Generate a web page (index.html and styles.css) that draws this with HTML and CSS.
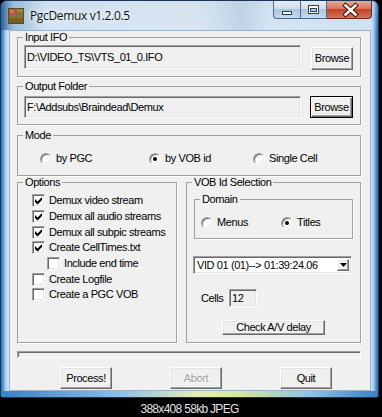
FILE: index.html
```html
<!DOCTYPE html>
<html lang="en">
<head>
<meta charset="utf-8">
<title>PgcDemux v1.2.0.5</title>
<link rel="stylesheet" href="styles.css">
</head>
<body>
<div class="screen">
  <div class="window">
    <div class="titlebar">
      <svg class="appicon" width="16" height="16" viewBox="0 0 16 16">
        <rect width="16" height="16" fill="#857235"/>
        <rect x="0" y="0" width="9" height="7" fill="#b0564a"/>
        <rect x="2" y="2" width="4" height="3" fill="#c57466"/>
        <rect x="9" y="1" width="6" height="3" fill="#9c8442"/>
        <rect x="0" y="10" width="16" height="6" fill="#736128"/>
        <rect x="0.5" y="0.5" width="15" height="15" fill="none" stroke="#5a4a20"/>
      </svg>
      <span class="title">PgcDemux v1.2.0.5</span>
      <div class="capbtns">
        <span class="capbtn cap-min"><svg width="26" height="17" viewBox="0 0 26 17"><rect x="8.5" y="10.5" width="9" height="3" fill="#fff" stroke="#2d3f55"/></svg></span>
        <span class="capbtn cap-max"><svg width="25" height="17" viewBox="0 0 25 17"><rect x="7.5" y="4.5" width="10" height="8" fill="#fff" stroke="#2d3f55"/><rect x="9.5" y="7.5" width="6" height="3" fill="#b9cde2" stroke="#2d3f55"/></svg></span>
        <span class="capbtn cap-close"><svg width="44" height="17" viewBox="0 0 44 17"><path d="M18.5 4.5 L28.5 13.5 M28.5 4.5 L18.5 13.5" stroke="#4a1a12" stroke-width="4.6" stroke-linecap="square"/><path d="M18.5 4.5 L28.5 13.5 M28.5 4.5 L18.5 13.5" stroke="#fff" stroke-width="2.4" stroke-linecap="square"/></svg></span>
      </div>
    </div>
    <div class="frame">
      <div class="client">
        <fieldset class="group g-input">
          <legend>Input IFO</legend>
          <div class="pathrow pr-input">
            <div class="edit path-in">D:\VIDEO_TS\VTS_01_0.IFO</div>
            <div class="btn browse-in">Browse</div>
          </div>
        </fieldset>

        <fieldset class="group g-output">
          <legend>Output Folder</legend>
          <div class="pathrow pr-output">
            <div class="edit path-out">F:\Addsubs\Braindead\Demux</div>
            <div class="btn btn-default browse-out">Browse</div>
          </div>
        </fieldset>

        <fieldset class="group g-mode">
          <legend>Mode</legend>
          <div class="moderow">
            <div class="opt"><span class="radio"></span><span>by PGC</span></div>
            <div class="opt"><span class="radio"><span class="dot"></span></span><span>by VOB id</span></div>
            <div class="opt"><span class="radio"></span><span>Single Cell</span></div>
          </div>
        </fieldset>

        <div class="lower">
          <fieldset class="group g-options">
            <legend>Options</legend>
            <div class="checks">
              <div class="check"><span class="cbox"><svg width="11" height="11" viewBox="0 0 11 11"><polygon points="2,4 4.5,6.5 9,2 9,5 4.5,9.5 2,7" fill="#000"/></svg></span><span>Demux video stream</span></div>
              <div class="check"><span class="cbox"><svg width="11" height="11" viewBox="0 0 11 11"><polygon points="2,4 4.5,6.5 9,2 9,5 4.5,9.5 2,7" fill="#000"/></svg></span><span>Demux all audio streams</span></div>
              <div class="check"><span class="cbox"><svg width="11" height="11" viewBox="0 0 11 11"><polygon points="2,4 4.5,6.5 9,2 9,5 4.5,9.5 2,7" fill="#000"/></svg></span><span>Demux all subpic streams</span></div>
              <div class="check"><span class="cbox"><svg width="11" height="11" viewBox="0 0 11 11"><polygon points="2,4 4.5,6.5 9,2 9,5 4.5,9.5 2,7" fill="#000"/></svg></span><span>Create CellTimes.txt</span></div>
              <div class="check indent"><span class="cbox"></span><span>Include end time</span></div>
              <div class="check"><span class="cbox"></span><span>Create Logfile</span></div>
              <div class="check"><span class="cbox"></span><span>Create a PGC VOB</span></div>
            </div>
          </fieldset>

          <fieldset class="group g-vob">
            <legend>VOB Id Selection</legend>
            <div class="vobbody">
              <fieldset class="group g-domain">
                <legend>Domain</legend>
                <div class="domainrow">
                  <div class="opt"><span class="radio"></span><span>Menus</span></div>
                  <div class="opt"><span class="radio"><span class="dot"></span></span><span>Titles</span></div>
                </div>
              </fieldset>
              <div class="combo">
                <span class="combo-text">VID 01 (01)--&gt; 01:39:24.06</span>
                <span class="combo-btn"><svg width="7" height="4" viewBox="0 0 7 4"><polygon points="0,0 7,0 3.5,4" fill="#000"/></svg></span>
              </div>
              <div class="cellsrow">
                <span class="cells-label">Cells</span>
                <div class="edit cells-box">12</div>
              </div>
              <div class="btn avbtn">Check A/V delay</div>
            </div>
          </fieldset>
        </div>

        <div class="progress"></div>

        <div class="actions">
          <div class="btn action">Process!</div>
          <div class="btn action disabled">Abort</div>
          <div class="btn action">Quit</div>
        </div>
      </div>
    </div>
  </div>
  <div class="caption">388x408 58kb JPEG</div>
</div>
</body>
</html>
```

FILE: styles.css
```css
* { box-sizing: border-box; }

html, body {
  margin: 0;
  padding: 0;
  background: #000;
}

body {
  width: 382px;
  height: 417px;
  overflow: hidden;
  font-family: "Liberation Sans", Arial, sans-serif;
}

.screen {
  width: 382px;
  height: 417px;
  display: flex;
  flex-direction: column;
}

/* ---------- window frame ---------- */
.window {
  width: 379px;
  height: 398px;
  flex: none;
  display: flex;
  flex-direction: column;
  border: 1px solid #1b3552;
  border-radius: 7px 7px 3px 3px;
  overflow: hidden;
  background: linear-gradient(to right,
    #2d6cab 0, #4c92d3 2px, #9cc6ec 4px, #cfe3f4 7px,
    #d9e7f3 50%,
    #cfe3f4 calc(100% - 7px), #9cc6ec calc(100% - 4px), #4c92d3 calc(100% - 2px), #2d6cab 100%);
}

.titlebar {
  height: 29px;
  flex: none;
  display: flex;
  align-items: flex-start;
  padding-left: 7px;
  background:
    linear-gradient(to right, rgba(44, 95, 150, .85) 0, rgba(90, 140, 190, .45) 12px, rgba(200, 218, 234, 0) 45px),
    linear-gradient(to right, rgba(255,255,255,0) 200px, rgba(150,180,210,.35) 240px, rgba(255,255,255,0) 270px),
    linear-gradient(to bottom, rgba(200,210,220,.25), rgba(200,210,220,0));
}

.appicon {
  flex: none;
  margin-top: 7px;
}

.title {
  margin-left: 6px;
  margin-top: 7px;
  font-family: "Open Sans", "Noto Sans", sans-serif;
  font-size: 12px;
  line-height: 16px;
  letter-spacing: -0.35px;
  color: #111;
  text-shadow: 0 0 5px #fff, 0 0 8px rgba(255, 255, 255, .8);
}

.capbtns {
  margin-left: auto;
  margin-right: 6px;
  display: flex;
  height: 18px;
}

.capbtn {
  display: block;
  height: 18px;
  border: 1px solid #4f6b8a;
  border-top: none;
  background: linear-gradient(#e6eef6, #cddded 45%, #abc5df 50%, #c7daee);
}

.capbtn svg { display: block; }

.cap-min {
  width: 28px;
  border-radius: 0 0 0 4px;
}

.cap-max {
  width: 26px;
  border-left: none;
}

.cap-close {
  width: 45px;
  border-left: none;
  border-color: #6b2a1d;
  border-radius: 0 0 4px 0;
  background: linear-gradient(#eaa894, #d8765f 45%, #c2432b 50%, #d5735b);
}

.frame {
  flex: 1;
  display: flex;
  padding: 0 7px 6px 8px;
  background: linear-gradient(to right, #3a7fc4 0%, #86bde9 30%, #e6ecb4 52%, #d7e39a 64%, #8cc4e6 82%, #3a7fc4 100%) left bottom / 100% 6px no-repeat;
}

/* ---------- dialog client ---------- */
.client {
  flex: 1;
  display: flex;
  flex-direction: column;
  background: #f0f0f0;
  border: 1px solid #9db2c8;
  padding: 0 9px 0 7px;
  font-size: 11px;
  line-height: 13px;
  letter-spacing: -0.4px;
  color: #000;
}

.group {
  margin: 0;
  padding: 0;
  min-width: 0;
  border: 1px solid #a0a0a0;
  box-shadow: 1px 1px 0 #fff;
}

.group > legend {
  margin-left: 5px;
  padding: 0 2px;
  font-size: 11px;
  line-height: 13px;
}

/* sunken edit */
.edit {
  border: 1px solid;
  border-color: #a0a0a0 #fff #fff #a0a0a0;
  box-shadow: inset 1px 1px 0 #696969, inset -1px -1px 0 #e3e3e3;
  background: #f0f0f0;
  display: flex;
  align-items: center;
  padding-left: 2px;
  white-space: nowrap;
  overflow: hidden;
}

/* raised button */
.btn {
  border: 1px solid;
  border-color: #fff #696969 #696969 #fff;
  box-shadow: inset -1px -1px 0 #a0a0a0, inset 1px 1px 0 #e3e3e3;
  background: #f0f0f0;
  display: flex;
  align-items: center;
  justify-content: center;
  white-space: nowrap;
}

.btn-default {
  border-color: #000;
  box-shadow: inset 1px 1px 0 #fff, inset -1px -1px 0 #696969, inset -2px -2px 0 #a0a0a0;
}

.btn.disabled {
  color: #a0a0a0;
  text-shadow: 1px 1px 0 #fff;
}

/* input / output rows */
.pathrow {
  display: flex;
  align-items: flex-start;
}

.pr-input {
  padding: 1px 7px 6px 6px;
  gap: 10px;
}

.pr-output {
  padding: 3px 7px 6px 6px;
  gap: 9px;
}

.path-in {
  width: 277px;
  height: 24px;
}

.browse-in {
  width: 42px;
  height: 23px;
  margin-top: 2px;
}

.path-out {
  width: 277px;
  height: 22px;
}

.browse-out {
  width: 43px;
  height: 22px;
}

.g-output { margin-top: 3px; }
.g-mode { margin-top: 4px; }

/* radios */
.opt {
  display: flex;
  align-items: center;
  gap: 4px;
  height: 13px;
}

.radio {
  width: 12px;
  height: 12px;
  flex: none;
  border-radius: 50%;
  border: 1px solid;
  border-color: #a0a0a0 #fff #fff #a0a0a0;
  box-shadow: inset 1px 1px 0 #696969, inset -1px -1px 0 #e3e3e3;
  background: #fff;
  display: flex;
  align-items: center;
  justify-content: center;
}

.dot {
  width: 4px;
  height: 4px;
  border-radius: 50%;
  background: #000;
}

.moderow {
  display: grid;
  grid-template-columns: 109px 104px auto;
  padding: 10px 0 10px 22px;
}

/* options / vob */
.lower {
  display: flex;
  gap: 9px;
}

.g-options {
  width: 160px;
  flex: none;
}

.g-vob {
  flex: 1;
}

.checks {
  padding: 4px 0 0 14px;
}

.check {
  height: 15.67px;
  display: flex;
  align-items: center;
  gap: 4px;
}

.check.indent { margin-left: 15px; }

.cbox {
  width: 13px;
  height: 13px;
  flex: none;
  border: 1px solid;
  border-color: #a0a0a0 #fff #fff #a0a0a0;
  box-shadow: inset 1px 1px 0 #696969, inset -1px -1px 0 #e3e3e3;
  background: #fff;
}

.cbox svg { display: block; }

.vobbody {
  display: flex;
  flex-direction: column;
  padding: 4px 7px 7px 7px;
}

.domainrow {
  display: grid;
  grid-template-columns: 80px auto;
  padding: 10px 0 9px 6px;
}

.combo {
  margin: 17px 1px 0 -1px;
  height: 18px;
  display: flex;
  align-items: center;
  border: 1px solid;
  border-color: #a0a0a0 #fff #fff #a0a0a0;
  box-shadow: inset 1px 1px 0 #696969, inset -1px -1px 0 #e3e3e3;
  background: #fff;
  padding: 0 2px 0 3px;
}

.combo-text { flex: 1; white-space: nowrap; }

.combo-btn {
  width: 12px;
  height: 12px;
  border: 1px solid;
  border-color: #fff #696969 #696969 #fff;
  box-shadow: inset -1px -1px 0 #a0a0a0;
  background: #f0f0f0;
  display: flex;
  align-items: center;
  justify-content: center;
}

.combo-btn svg { display: block; }

.cellsrow {
  margin-top: 15px;
  height: 18px;
  display: flex;
  align-items: center;
}

.cells-label {
  margin-left: 7px;
  width: 28px;
}

.cells-box {
  width: 28px;
  height: 18px;
}

.avbtn {
  margin-top: 13px;
  margin-left: 28px;
  width: 103px;
  height: 15px;
}

/* progress + actions */
.progress {
  margin-top: 8px;
  height: 7px;
  border: 1px solid;
  border-color: #a0a0a0 #fff #fff #a0a0a0;
  box-shadow: inset 1px 1px 0 #696969;
}

.actions {
  margin-top: 9px;
  display: flex;
  gap: 58px;
  padding-left: 43px;
}

.action {
  width: 52px;
  height: 22px;
}

/* caption under the thumbnail */
.caption {
  flex: 1;
  display: flex;
  align-items: center;
  justify-content: center;
  padding: 3px 3px 0 0;
  color: #e2e2e2;
  font-size: 12px;
  letter-spacing: -0.7px;
}
```
